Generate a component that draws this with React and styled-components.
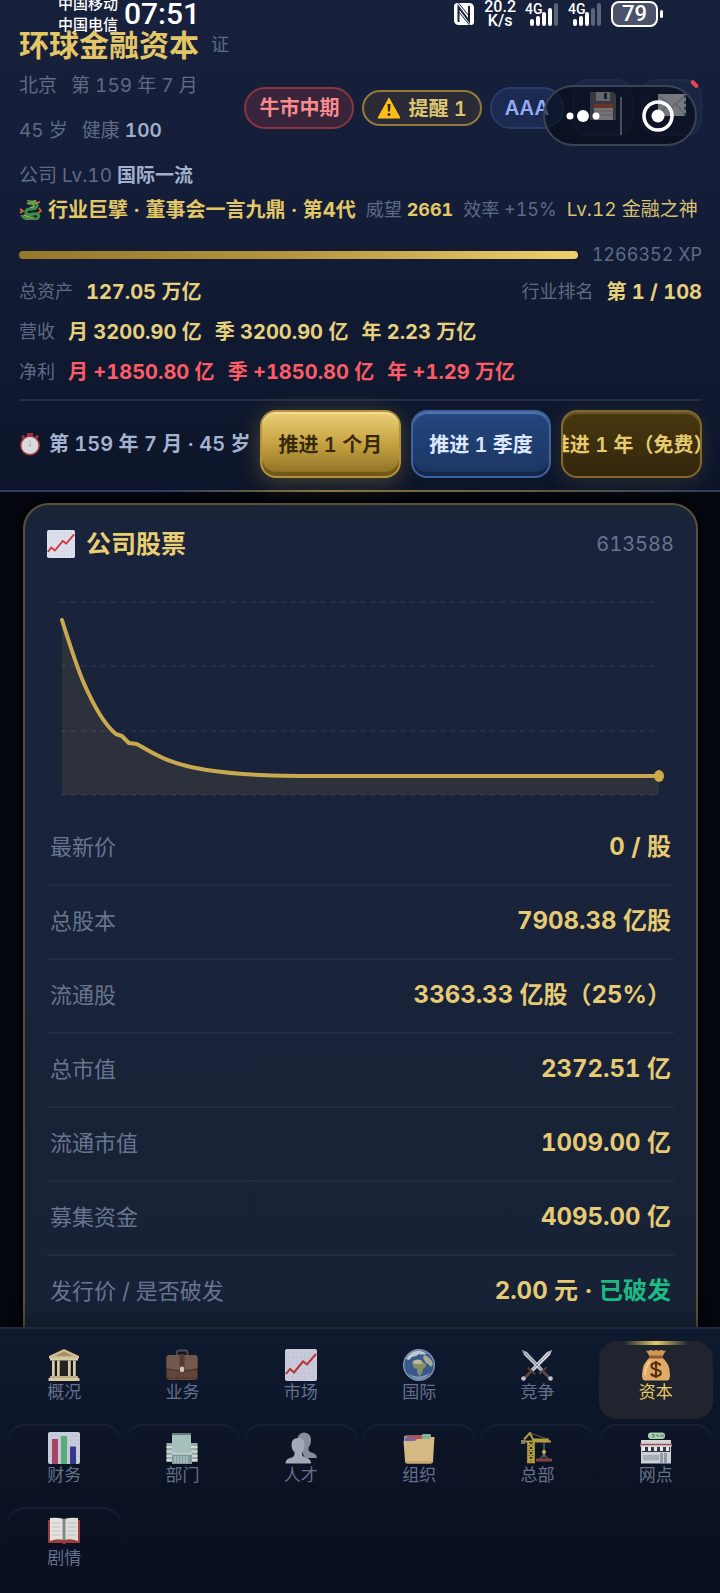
import React, { useState } from 'react'
import styled, { createGlobalStyle } from 'styled-components'

const tabs = [
    { id: 'overview', label: '概况' },
    { id: 'business', label: '业务' },
    { id: 'market', label: '市场' },
    { id: 'world', label: '国际' },
    { id: 'rivals', label: '竞争' },
    { id: 'capital', label: '资本' },
    { id: 'finance', label: '财务' },
    { id: 'office', label: '部门' },
    { id: 'people', label: '人才' },
    { id: 'folder', label: '组织' },
    { id: 'crane', label: '总部' },
    { id: 'store', label: '网点' },
    { id: 'story', label: '剧情' },
]

const stockRows = [
    { label: '最新价', value: '0 / 股' },
    { label: '总股本', value: '7908.38 亿股' },
    { label: '流通股', value: '3363.33 亿股（25%）' },
    { label: '总市值', value: '2372.51 亿' },
    { label: '流通市值', value: '1009.00 亿' },
    { label: '募集资金', value: '4095.00 亿' },
    { label: '发行价 / 是否破发', value: '2.00 元 · ', broken: '已破发' },
]

const ChartUp = () => (
    <>
        <rect x="0" y="0" width="32" height="32" rx="2" fill="#dfe0ee" />
        <path
            d="M4 0V32M8 0V32M12 0V32M16 0V32M20 0V32M24 0V32M28 0V32M0 4H32M0 8H32M0 12H32M0 16H32M0 20H32M0 24H32M0 28H32"
            stroke="#d0d3e4"
            strokeWidth="0.6"
        />
        <path
            d="M1 25L5 20L9 23.500L18 12.500L22 15.500L31 5"
            fill="none"
            stroke="#cf3634"
            strokeWidth="2"
        />
    </>
)

const icons = {
    overview: (
        <>
            <path d="M16 0L31 7V9.500H1V7Z" fill="#e3cf9c" />
            <path d="M16 2.500L25 7H7Z" fill="#b59d69" />
            <rect x="2" y="9" width="28" height="2.500" fill="#f0dfb4" />
            <rect x="11" y="12" width="10" height="15" fill="#2a2321" />
            <path d="M4 11.500H7V27H4ZM9 11.500H12V27H9ZM20 11.500H23V27H20ZM25 11.500H28V27H25Z" fill="#efe0b8" />
            <path d="M6.200 11.500H7V27H6.200ZM11.200 11.500H12V27H11.200ZM22.200 11.500H23V27H22.200ZM27.200 11.500H28V27H27.200Z" fill="#b49d6b" />
            <rect x="2" y="27" width="28" height="2" fill="#d6c08b" />
            <rect x="0.500" y="29" width="31" height="3" fill="#ecdcae" />
        </>
    ),
    business: (
        <>
            <path d="M11 6V3Q11 1.500 12.500 1.500H20Q21.500 1.500 21.500 3V6" fill="none" stroke="#5a5357" strokeWidth="1.800" />
            <rect x="0.500" y="6" width="31" height="25" rx="3" fill="#6c4b3c" />
            <path d="M0.500 9Q0.500 6 3.500 6H28.500Q31.500 6 31.500 9V19Q16 23 0.500 19Z" fill="#80604f" />
            <path d="M1 20Q16 24 31 20" fill="none" stroke="#4d3328" strokeWidth="1" />
            <rect x="13.500" y="5" width="5" height="15" fill="#5b3f33" />
            <rect x="14" y="17.500" width="4" height="5.500" rx="1.500" fill="#ddd8d4" />
            <rect x="1" y="28.500" width="30" height="1" fill="#553a2e" />
        </>
    ),
    market: <ChartUp />,
    world: (
        <>
            <circle cx="16" cy="16" r="16" fill="#8ea4bd" />
            <circle cx="16" cy="16" r="14.600" fill="#3d6296" />
            <path d="M3 10Q7 2 16 1.500Q21 2 24 5Q19 6 16 5Q13 8 9 8L6 11Z" fill="#d5dbe0" />
            <path d="M21 6Q28 8 30 15L28 18Q26 15 23 14L20 9Z" fill="#b7bba8" />
            <path d="M9.500 12Q13 9.500 18 11L21 14L23 15Q23.500 18 20 20Q19.500 25 16.500 27Q13.500 24 14 20Q9 19.500 9.500 12Z" fill="#8f9b6a" />
            <path d="M10.500 12Q14 10 18 11L20 14.500Q14 15.500 10 14.500Z" fill="#cfc9a6" />
            <path d="M5 24Q14 31 27 24Q22 30.500 16 30.500Q10 30.500 5 24Z" fill="#8da7c6" />
        </>
    ),
    rivals: (
        <>
            <path d="M1 1L6 3L23 21L20.500 23.500L3 6Z" fill="#c9ccd6" />
            <path d="M31 1L26 3L9 21L11.500 23.500L29 6Z" fill="#e5e7ee" />
            <path d="M1 1L22 22" stroke="#8d92a2" strokeWidth="1" />
            <path d="M31 1L10 22" stroke="#9ba0af" strokeWidth="1" />
            <path d="M18 25L25.500 18.500M14 25L6.500 18.500" stroke="#5f4541" strokeWidth="2" />
            <path d="M22 22.500L28 28.500M10 22.500L4 28.500" stroke="#6d4c47" strokeWidth="2.500" />
            <circle cx="29.500" cy="29.500" r="2.300" fill="#d5d7de" />
            <circle cx="2.500" cy="29.500" r="2.300" fill="#d5d7de" />
        </>
    ),
    capital: (
        <>
            <path d="M10 8L6 1.500Q9 2.500 11 0.800Q14 2.500 16 0.800Q19 2.500 21 0.800Q24 2.500 26 1.500L22 8Z" fill="#d09a55" />
            <path d="M10.500 8Q2 14 2 26Q2 31.500 5 31.500H27Q30 31.500 30 26Q30 14 21.500 8Z" fill="#e0aa66" />
            <path d="M10 12Q5 18 5 26" fill="none" stroke="#f2cb90" strokeWidth="2" />
            <rect x="9" y="6.500" width="14" height="3" rx="1.500" fill="#8f5c2d" />
            <path
                d="M20.500 16.500Q19.500 14 16 14Q11.500 14 11.500 17Q11.500 19.500 16 20.500Q20.800 21.500 20.800 24Q20.800 27 16 27Q12 27 11 24.500M16 12V29"
                fill="none"
                stroke="#543013"
                strokeWidth="2.200"
            />
        </>
    ),
    finance: (
        <>
            <rect width="32" height="32" rx="2" fill="#dfe2ee" />
            <path d="M4 0V32M8 0V32M12 0V32M16 0V32M20 0V32M24 0V32M28 0V32M0 4H32M0 8H32M0 12H32M0 16H32M0 20H32M0 24H32M0 28H32" stroke="#d0d3e4" strokeWidth="0.600" />
            <rect x="4" y="7" width="6" height="25" fill="#b9486e" />
            <rect x="13" y="4" width="6" height="28" fill="#5fbd83" />
            <rect x="22" y="14.500" width="6" height="17.500" fill="#3b3d96" />
        </>
    ),
    office: (
        <>
            <rect x="0.500" y="11" width="31" height="19" fill="#a9bdb9" />
            <path d="M0.500 15H31.500M0.500 19.500H31.500M0.500 24H31.500M0.500 28H31.500" stroke="#e3efeb" strokeWidth="2" />
            <rect x="6" y="1" width="19" height="22" fill="#b6d3ce" />
            <rect x="6" y="1" width="19" height="2" fill="#6f8885" />
            <rect x="6" y="21" width="20" height="11" fill="#8dabaa" />
            <path d="M9 24V31M12 24V31M15 24V31M18 24V31M21 24V31" stroke="#d0e2de" strokeWidth="1.200" />
            <rect x="6" y="21" width="20" height="1.500" fill="#dfebe8" />
        </>
    ),
    people: (
        <>
            <path d="M19 0.500Q26 1 26 8Q26 13 23.500 15.500V18Q24 20 28 21Q31.500 22 32 26H20L12 10Q12 1 19 0.500Z" fill="#949cab" />
            <path d="M13 6Q19.500 6 19.500 13Q19.500 18 17 20V22.500Q18 25 22 26Q26 27 26 31.500H0.500Q0.500 27 5 26Q9 25 9.500 22.500V20Q6.500 18 6.500 13Q6.500 6 13 6Z" fill="#b4bac7" />
        </>
    ),
    folder: (
        <>
            <path d="M1 9V5Q1 3.500 3 3.500H18L20 2H27Q28 2 28 3.500V5H30.500V10Z" fill="#8fc3a4" />
            <path d="M4 3.500H19V9H4Z" fill="#c9595c" />
            <path d="M2 5.500H12V10H2Z" fill="#8b6bb0" />
            <path d="M0.500 9H12L14 7H27L28.500 5H31.500L30 29Q30 31.500 27.500 31.500H4.500Q2 31.500 2 29Z" fill="#ecca8e" />
            <path d="M2.500 29L30 29Q29.500 31.500 27.500 31.500H4.500Q2.600 31.500 2.500 29Z" fill="#d8b478" />
        </>
    ),
    crane: (
        <>
            <path d="M7 9V30M13 9V30M7 11L13 16L7 21L13 26L7 30M13 11L7 16L13 21L7 26L13 30M6 30.500H14" fill="none" stroke="#c8ae43" strokeWidth="1.700" />
            <path d="M1 9.500H30M3 7.500L9 1L12 7.500H28" fill="none" stroke="#c8ae43" strokeWidth="2" />
            <path d="M9 1L28 7.500" stroke="#7d7b68" strokeWidth="0.800" />
            <rect x="0" y="8" width="4" height="4" fill="#8d8a74" />
            <path d="M23 10V26M19 27L23 22L27 27" fill="none" stroke="#8d9097" strokeWidth="1" />
            <circle cx="23" cy="20" r="2" fill="#d9c453" />
            <rect x="15" y="26.500" width="16" height="3" fill="#8b4a44" />
        </>
    ),
    store: (
        <>
            <rect x="8" y="0.500" width="17" height="6.500" rx="3" fill="#bfe0c8" />
            <path d="M12 2.500H14V5H12M17 2.500V4H19M21 2.500V5M23 2.500V5" fill="none" stroke="#468b5c" strokeWidth="1" />
            <rect x="1" y="8" width="30" height="23.500" fill="#e2e5e8" />
            <path d="M2 8H30L31.500 12V15H0.500V12Z" fill="#eee9e9" />
            <path d="M1 12.500H31" stroke="#a5595d" strokeWidth="1.500" />
            <rect x="2" y="15" width="28" height="5" fill="#333e43" />
            <path d="M2 15H5V19H2M8 15H11V19H8M14 15H17V19H14M20 15H23V19H20M26 15H29V19H26" fill="#fff" />
            <rect x="3" y="23" width="16" height="5.500" fill="#b3c0c5" />
            <rect x="20" y="21" width="7" height="10" fill="#9fadb4" />
            <path d="M23.500 21V31" stroke="#dfe4e6" />
        </>
    ),
    story: (
        <>
            <path d="M0 5H32V28H18L16 29.500L14 28H0Z" fill="#a8433d" />
            <path d="M2 3Q10 2 15.500 4V25Q9 23 2 26Z" fill="#fbf9f4" />
            <path d="M30 3Q22 2 16.500 4V25Q23 23 30 26Z" fill="#f4f2ed" />
            <path d="M14.500 3.500L16 4L17.500 3.500V24.500L16 25L14.500 24.500Z" fill="#8b9690" />
            <path d="M4 8H12M4 12H12M4 16H12M4 20H12M20 8H28M20 12H28M20 16H28M20 20H28" stroke="#d3d2ce" strokeWidth="1" />
        </>
    ),
}

const Icon = ({ name, size = 32 }) => (
    <svg width={size} height={size} viewBox="0 0 32 32" aria-hidden="true">
        {icons[name]}
    </svg>
)

const Signal = ({ bars, dim }) => (
    <svg width="34" height="26" viewBox="0 0 34 26" aria-hidden="true">
        {bars.map((h, i) => (
            <rect
                key={h}
                x={5 + i * 6}
                y={25 - h}
                width="4"
                height={h}
                rx="2"
                fill={i >= dim ? '#5c6479' : '#fff'}
            />
        ))}
    </svg>
)

const StatusBar = () => (
    <Status>
        <Carriers>
            <span>中国移动</span>
            <span>中国电信</span>
        </Carriers>
        <Clock>07:51</Clock>
        <StatusRight>
            <svg width="22" height="24" viewBox="0 0 22 24" aria-hidden="true">
                <path d="M5 1H16Q21 1 21 6V20Q21 23 18 23H6Q1 23 1 18V4Q1 1 5 1Z" fill="#fff" />
                <path d="M5.500 20V5L16 19V4" fill="none" stroke="#18223c" strokeWidth="2" />
                <path d="M5.500 1L16 14M6 10L16.500 23" fill="none" stroke="#18223c" strokeWidth="1" />
            </svg>
            <Speed>
                <span>20.2</span>
                <span>K/s</span>
            </Speed>
            <Network>
                <Signal bars={[7, 10, 14, 18, 23]} dim={4} />
                <em>4G</em>
            </Network>
            <Network>
                <Signal bars={[7, 10, 14, 18, 23]} dim={3} />
                <em>4G</em>
            </Network>
            <Battery>79</Battery>
        </StatusRight>
    </Status>
)

const StockChart = () => (
    <Chart viewBox="0 0 628 240" preserveAspectRatio="none" aria-label="公司股票">
        {[30, 94, 159, 223].map((y) => (
            <line key={y} x1="14" x2="610" y1={y} y2={y} stroke="#243048" strokeWidth="2" strokeDasharray="5 5" />
        ))}
        <path
            d="M15 48C21 67 30 95 36 109C48 137 58 153 70 162L75 164L82 171L90 172C105 180 120 192 160 198C200 204 240 204 280 204H613V223H15Z"
            fill="#d4af4a"
            fillOpacity="0.100"
        />
        <path
            d="M15 48C21 67 30 95 36 109C48 137 58 153 69 162L75 164L82 171L90 172C105 180 120 192 160 198C200 204 240 204 280 204H613"
            fill="none"
            stroke="#c9a94f"
            strokeWidth="4"
            strokeLinecap="round"
            strokeLinejoin="round"
        />
        <ellipse cx="613" cy="204" rx="5" ry="6" fill="#d0aa46" />
    </Chart>
)

const App = () => {
    const [active, setActive] = useState('capital')

    return (
        <Page>
            <GlobalStyle />
            <Header>
                <StatusBar />
                <Top>
                    <Company>
                        <TitleRow>
                            <h1>环球金融资本</h1>
                            <span>证</span>
                        </TitleRow>
                        <Meta>
                            <span>北京</span>
                            <span>第 159 年 7 月</span>
                        </Meta>
                        <Meta>
                            <span>45 岁</span>
                            <span>
                                健康 <b>100</b>
                            </span>
                        </Meta>
                        <Meta>
                            <span>
                                公司 Lv.10 <b>国际一流</b>
                            </span>
                        </Meta>
                    </Company>
                    <Badges>
                        <Pill $tone="red">牛市中期</Pill>
                        <AlertButton type="button">
                            <svg width="24" height="22" viewBox="0 0 24 22" aria-hidden="true">
                                <path d="M12 1L23 21H1Z" fill="#fdbf17" stroke="#fdbf17" strokeLinejoin="round" />
                                <path d="M10.500 7H13.500L13 14.500H11Z" fill="#332b1c" />
                                <circle cx="12" cy="17.500" r="1.500" fill="#332b1c" />
                            </svg>
                            提醒 1
                        </AlertButton>
                        <Pill $tone="blue">AAA</Pill>
                        <IconButton type="button" aria-label="存档">
                            <svg width="26" height="28" viewBox="0 0 26 28" aria-hidden="true">
                                <path d="M0 0H23L26 3V28H0Z" fill="#77767a" />
                                <rect x="6" y="0" width="14" height="9" fill="#d8d9db" />
                                <rect x="14" y="1" width="3" height="6" fill="#3b3c42" />
                                <rect x="4" y="12" width="19" height="16" fill="#fbf8ef" />
                                <rect x="4" y="12" width="19" height="4" fill="#e8663f" />
                                <path d="M4 19H23M4 23H23" stroke="#c9c7c0" />
                            </svg>
                        </IconButton>
                        <IconButton type="button" aria-label="邮件">
                            <svg width="28" height="24" viewBox="0 0 28 24" aria-hidden="true">
                                <rect width="28" height="22" fill="#fff" />
                                <path d="M0 1L14 13L28 1M0 22L10 10M28 22L18 10" fill="none" stroke="#d0d4dc" strokeWidth="1.500" />
                                <path d="M27 1V22" stroke="#5f86c4" strokeWidth="2" strokeDasharray="3 3" />
                            </svg>
                            <Unread />
                        </IconButton>
                        <Capsule>
                            <CapsuleButton type="button" aria-label="更多">
                                <svg width="34" height="12" viewBox="0 0 34 12" aria-hidden="true">
                                    <g fill="#fff">
                                        <circle cx="4" cy="6" r="3.500" />
                                        <circle cx="17" cy="6" r="6" />
                                        <circle cx="30" cy="6" r="3.500" />
                                    </g>
                                </svg>
                            </CapsuleButton>
                            <CapsuleButton type="button" aria-label="关闭">
                                <svg width="32" height="32" viewBox="0 0 32 32" aria-hidden="true">
                                    <circle cx="16" cy="16" r="14" fill="none" stroke="#fff" strokeWidth="3.500" />
                                    <circle cx="16" cy="16" r="6.500" fill="#fff" />
                                </svg>
                            </CapsuleButton>
                        </Capsule>
                    </Badges>
                </Top>

                <Rank>
                    <RankTitle>
                        <svg width="23" height="20" viewBox="0 0 23 20" aria-hidden="true">
                            <path d="M10 2Q19 1 18 6Q17 9 12 9Q6 9 7 13Q8 16 14 14Q19 13 20 16Q19 20 12 19Q4 19 3 15" fill="none" stroke="#3f8f45" strokeWidth="3" />
                            <path d="M9 4Q14 3 15 6Q14 8 11 7M5 15Q9 18 15 17" fill="none" stroke="#b9c455" strokeWidth="1.200" />
                            <path d="M7 4L10 1L16 1L19 4L14 5Z" fill="#5aa54a" />
                            <path d="M10 1L8 0M15 1L17 0M1 9L4 11L1 13M20 8L22 11L19 13M17 3L21 2" fill="none" stroke="#db6a2d" strokeWidth="1.600" />
                        </svg>
                        行业巨擘 · 董事会一言九鼎 · 第4代
                    </RankTitle>
                    <span>
                        威望 <b>2661</b>
                    </span>
                    <span>效率 +15%</span>
                    <RankLevel>Lv.12 金融之神</RankLevel>
                </Rank>

                <Experience>
                    <ExperienceBar />
                    <span>1266352 XP</span>
                </Experience>

                <Stats>
                    <Stat>
                        <span>总资产</span>
                        <b>127.05 万亿</b>
                        <StatEnd>
                            <span>行业排名</span>
                            <b>第 1 / 108</b>
                        </StatEnd>
                    </Stat>
                    <Stat>
                        <span>营收</span>
                        <b>月 3200.90 亿</b>
                        <b>季 3200.90 亿</b>
                        <b>年 2.23 万亿</b>
                    </Stat>
                    <Stat $profit>
                        <span>净利</span>
                        <b>月 +1850.80 亿</b>
                        <b>季 +1850.80 亿</b>
                        <b>年 +1.29 万亿</b>
                    </Stat>
                </Stats>

                <Advance>
                    <Today>
                        <svg width="22" height="24" viewBox="0 0 22 24" aria-hidden="true">
                            <path d="M8 1H14V4H8ZM2 4L5 3L6 6L4 7ZM20 4L17 3L16 6L18 7Z" fill="#9f3337" />
                            <circle cx="11" cy="13.500" r="10" fill="#a9343b" />
                            <circle cx="11" cy="13.500" r="8.500" fill="#d9d9dc" />
                            <path d="M11 13.500V8" stroke="#b9bac0" />
                            <circle cx="11" cy="13.500" r="1" fill="#a0a2aa" />
                        </svg>
                        第 159 年 7 月 · 45 岁
                    </Today>
                    <AdvanceButton type="button" $kind="gold">
                        推进 1 个月
                    </AdvanceButton>
                    <AdvanceButton type="button" $kind="blue">
                        推进 1 季度
                    </AdvanceButton>
                    <AdvanceButton type="button" $kind="bronze">
                        推进 1 年（免费）
                    </AdvanceButton>
                </Advance>
            </Header>

            <Main>
                <Card>
                    <CardHead>
                        <svg width="28" height="28" viewBox="0 0 32 32" aria-hidden="true">
                            <ChartUp />
                        </svg>
                        <h2>公司股票</h2>
                        <span>613588</span>
                    </CardHead>
                    <StockChart />
                    <dl>
                        {stockRows.map((row) => (
                            <StockRow key={row.label}>
                                <dt>{row.label}</dt>
                                <dd>
                                    {row.value}
                                    {row.broken && <Broken>{row.broken}</Broken>}
                                </dd>
                            </StockRow>
                        ))}
                    </dl>
                </Card>
            </Main>

            <TabBar>
                {tabs.map((tab) => (
                    <Tab
                        key={tab.id}
                        type="button"
                        $active={tab.id === active}
                        onClick={() => setActive(tab.id)}
                    >
                        <Icon name={tab.id} />
                        {tab.label}
                    </Tab>
                ))}
            </TabBar>
        </Page>
    )
}

const GlobalStyle = createGlobalStyle`
    * {
        box-sizing: border-box;
        margin: 0;
        padding: 0;
    }

    body {
        background: #04070f;
        color: #5f6a85;
        font-family: Inter, 'Noto Sans CJK SC', sans-serif;
        font-size: 18px;
        font-variant-numeric: tabular-nums;
        line-height: 26px;
    }

    button {
        font-family: inherit;
        font-variant-numeric: inherit;
        cursor: pointer;
    }

    svg {
        flex-shrink: 0;
    }
`

const Page = styled.div`
    height: 100vh;
    display: flex;
    flex-direction: column;
`

// HEADER
const Header = styled.header`
    position: relative;
    z-index: 2;
    padding: 28px 18px 12px 19px;
    background: linear-gradient(180deg, #17213c 0%, #131d37 45%, #0c1529 100%);
    border-bottom: 2px solid;
    border-image: linear-gradient(90deg, #2b3a5e, #2b3a5e 22%, #85733f 45%, #6b6040 70%, #2b3a5e) 1;
    white-space: nowrap;
`

const Status = styled.div`
    position: absolute;
    z-index: 1;
    top: 0;
    left: 0;
    width: 100%;
    height: 28px;
    padding: 0 62px 0 58px;
    display: flex;
    align-items: center;
    color: #fff;
    font-weight: 500;
`

const Carriers = styled.div`
    display: flex;
    flex-direction: column;
    font-size: 15px;
    line-height: 21px;
`

const Clock = styled.span`
    margin-left: 6px;
    font-family: Roboto, sans-serif;
    font-size: 30px;
`

const StatusRight = styled.div`
    margin-left: auto;
    display: flex;
    align-items: center;
    gap: 9px;
`

const Speed = styled.div`
    display: flex;
    flex-direction: column;
    text-align: center;
    font-family: Roboto, sans-serif;
    font-size: 16px;
    line-height: 14px;
`

const Network = styled.div`
    position: relative;
    display: flex;

    em {
        position: absolute;
        top: 0;
        left: 0;
        font-family: Roboto, sans-serif;
        font-size: 14px;
        font-style: normal;
        line-height: 16px;
    }
`

const Battery = styled.span`
    position: relative;
    padding: 0 9px;
    font-family: Roboto, sans-serif;
    font-size: 22px;
    line-height: 22px;
    background: #4a536a;
    border: 2px solid #fff;
    border-radius: 8px;

    &::after {
        content: '';
        position: absolute;
        top: 7px;
        right: -7px;
        width: 3px;
        height: 8px;
        border-radius: 2px;
        background: #fff;
    }
`

const Top = styled.div`
    display: flex;
    align-items: center;
    justify-content: space-between;
`

const Company = styled.div`
    display: flex;
    flex-direction: column;
`

const TitleRow = styled.div`
    display: flex;
    align-items: center;
    gap: 12px;
    height: 34px;
    margin-bottom: 11px;

    h1 {
        color: #e3c766;
        font-size: 30px;
        font-weight: 700;
        line-height: 34px;
    }
`

const Meta = styled.div`
    display: flex;
    gap: 14px;
    font-size: 19px;

    & + & {
        margin-top: 19px;
    }

    b {
        color: #a3b0cc;
        font-weight: 600;
    }
`

const Badges = styled.div`
    position: relative;
    display: flex;
    align-items: center;
    gap: 8px;
    margin-bottom: 2px;
`

const tones = {
    red: 'color: #f98a8e; background: #38253b; border-color: #8c353f;',
    blue: 'color: #93acf5; background: #1b2a50; border-color: #293b66;',
}

const Pill = styled.span`
    padding: 0 13px;
    font-size: 20px;
    font-weight: 600;
    line-height: 38px;
    border: 2px solid;
    border-radius: 21px;
    ${({ $tone }) => tones[$tone]}
`

const AlertButton = styled.button`
    display: flex;
    align-items: center;
    gap: 7px;
    height: 36px;
    padding: 0 13px;
    color: #ddc473;
    font-size: 20px;
    font-weight: 600;
    background: #2a2b36;
    border: 2px solid #93793a;
    border-radius: 18px;
`

const IconButton = styled.button`
    position: relative;
    display: flex;
    align-items: center;
    justify-content: center;
    width: 61px;
    height: 57px;
    padding-bottom: 4px;
    background: #1a2542;
    border: 2px solid #1f2b49;
    border-radius: 16px;
`

const Unread = styled.i`
    position: absolute;
    top: 1px;
    right: 1px;
    width: 9px;
    height: 4px;
    border-radius: 2px;
    background: #ee4550;
    transform: rotate(45deg);
`

const Capsule = styled.div`
    position: absolute;
    top: 6px;
    right: 5px;
    display: flex;
    width: 154px;
    height: 61px;
    background: rgba(4, 7, 18, 0.55);
    border: 2px solid #3b4356;
    border-radius: 31px;
`

const CapsuleButton = styled.button`
    flex: 1;
    display: flex;
    align-items: center;
    justify-content: center;
    background: none;
    border: none;

    & + & {
        position: relative;
    }

    & + &::before {
        content: '';
        position: absolute;
        left: 0;
        width: 2px;
        height: 38px;
        background: #4a4f5a;
    }
`

const Rank = styled.div`
    display: flex;
    align-items: center;
    gap: 10px;
    margin-top: 8px;

    b {
        color: #e3c766;
        font-weight: 700;
    }
`

const RankTitle = styled.strong`
    display: flex;
    align-items: center;
    gap: 6px;
    color: #e3c766;
    font-size: 20px;
    font-weight: 700;
`

const RankLevel = styled.span`
    color: #d9c173;
    font-size: 19px;
`

const Experience = styled.div`
    display: flex;
    align-items: center;
    gap: 14px;
    margin-top: 19px;
`

const ExperienceBar = styled.div`
    flex: 1;
    height: 8px;
    border-radius: 4px;
    background: linear-gradient(90deg, #957829, #b6963f 50%, #efcf6d);
`

const Stats = styled.div`
    display: grid;
    gap: 14px;
    margin-top: 11px;
`

const Stat = styled.div`
    display: flex;
    align-items: center;
    gap: 13px;

    b {
        color: ${({ $profit }) => ($profit ? '#fb5c66' : '#e6d07c')};
        font-size: 20px;
        font-weight: 700;
    }
`

const StatEnd = styled.div`
    display: flex;
    align-items: center;
    gap: 13px;
    margin-left: auto;
`

const Advance = styled.div`
    display: grid;
    grid-template-columns: 231px repeat(3, minmax(0, 1fr));
    gap: 10px;
    margin-top: 14px;
    padding-top: 9px;
    border-top: 2px solid #232c45;
`

const Today = styled.div`
    display: flex;
    align-items: center;
    gap: 8px;
    color: #a5b2d0;
    font-size: 20px;
    font-weight: 600;
`

const kinds = {
    gold: `
        color: #372a0c;
        background: linear-gradient(180deg, #ebcf77, #c5a241 50%, #8b6e24);
        border-color: #b3913d;
        box-shadow: inset 0 2px 1px #f1dc98, inset 0 -4px 1px #715817, 0 4px 22px rgba(212, 175, 74, 0.3);
    `,
    blue: `
        color: #dde8ff;
        background: linear-gradient(180deg, #24467f, #1b3662);
        border-color: #3c639f;
        box-shadow: inset 0 2px 1px #5777a8, inset 0 -4px 1px #142747;
    `,
    bronze: `
        color: #e6cb70;
        background: linear-gradient(180deg, #49380f, #33260c);
        border-color: #82692a;
        box-shadow: inset 0 2px 1px #6b5930, 0 4px 20px rgba(212, 175, 74, 0.15);
    `,
}

const AdvanceButton = styled.button`
    display: flex;
    align-items: center;
    justify-content: center;
    height: 68px;
    padding-bottom: 2px;
    overflow: hidden;
    font-size: 20px;
    font-weight: 600;
    white-space: nowrap;
    border: 2px solid;
    border-radius: 16px;
    ${({ $kind }) => kinds[$kind]}
`

// STOCK CARD
const Main = styled.main`
    flex: 1;
    min-height: 0;
    padding: 11px 22px 0 23px;
    overflow: hidden auto;
    scrollbar-width: none;
`

const Card = styled.section`
    padding: 22px;
    background: linear-gradient(180deg, #1a2536 0, #19233b 30px, #182236 100%);
    border: 2px solid #5a513b;
    border-radius: 26px;
    box-shadow: 0 0 10px #000;
`

const CardHead = styled.div`
    display: flex;
    align-items: center;
    gap: 11px;
    height: 34px;

    h2 {
        color: #e9cf72;
        font-size: 25px;
        font-weight: 700;
    }

    span {
        margin-left: auto;
        color: #69748f;
        font-size: 20px;
    }
`

const Chart = styled.svg`
    display: block;
    width: 100%;
    height: 240px;
    margin-top: 11px;
`

const StockRow = styled.div`
    display: flex;
    align-items: center;
    justify-content: space-between;
    height: 74px;
    padding: 0 3px 2px;
    border-bottom: 2px solid #212b43;

    dt {
        color: #69748f;
        font-size: 22px;
    }

    dd {
        color: #e6ca74;
        font-size: 24px;
        font-weight: 700;
        white-space: pre;
    }
`

const Broken = styled.span`
    color: #1dba84;
`

// BOTTOM TABS
const TabBar = styled.nav`
    position: relative;
    display: grid;
    grid-template-columns: repeat(6, 1fr);
    gap: 5px 4px;
    padding: 12px 7px 8px;
    background: linear-gradient(180deg, #0f1a2f, #0c1325 50%, #090f1f);
    border-top: 2px solid #20293e;
    box-shadow: 0 -4px 22px rgba(0, 0, 0, 0.35);
`

const Tab = styled.button`
    position: relative;
    display: flex;
    flex-direction: column;
    align-items: center;
    height: 78px;
    padding-top: 8px;
    color: ${({ $active }) => ($active ? '#e6ca62' : '#64708c')};
    font-size: 17px;
    line-height: 22px;
    background: ${({ $active }) => ($active ? '#20242f' : 'none')};
    border: none;
    border-radius: 18px;

    svg {
        opacity: ${({ $active }) => ($active ? 1 : 0.9)};
    }

    &:nth-child(n + 7) {
        box-shadow: inset 0 2px 1px #172037;
    }

    &::before {
        content: '';
        display: ${({ $active }) => ($active ? 'block' : 'none')};
        position: absolute;
        top: 0;
        left: 22%;
        right: 22%;
        height: 4px;
        background: linear-gradient(90deg, transparent, #e6ca62, transparent);
    }
`

export default App
